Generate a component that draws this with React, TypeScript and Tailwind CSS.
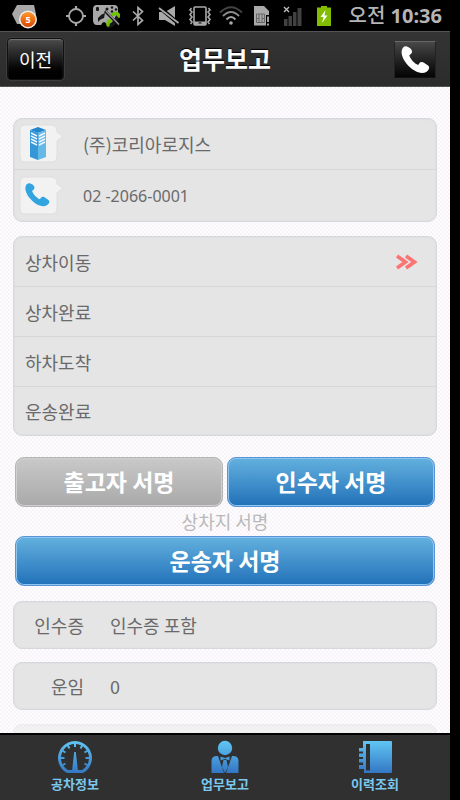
import type { ReactNode } from 'react';

const steps = [
  { id: 'load-move', label: '상차이동', current: true },
  { id: 'load-done', label: '상차완료', current: false },
  { id: 'unload-arrive', label: '하차도착', current: false },
  { id: 'delivery-done', label: '운송완료', current: false },
];

const details = [
  { label: '인수증', value: '인수증 포함' },
  { label: '운임', value: '0' },
];

const PHONE_PATH =
  'M7 1.6 C5.4 .8 3.4 1.6 2.4 3.4 C.6 6.6 1.6 12 6 17.6 C10.6 23.4 16.6 27 21.4 27 C24.4 27 26.8 25.6 27.8 23.4 C28.6 21.8 28.2 20.6 26.8 19.6 L22.8 17 C21.2 16 19.6 16.4 18.6 17.8 L17.6 19.2 C14 18 9.8 13.2 9 9.8 L10.4 8.8 C11.8 7.8 12 6.4 11.2 4.8 C10.2 3 8.8 2.4 7 1.6 Z';

const Slot = ({ children }: { children: ReactNode }) => (
  <span className="flex w-[31px] shrink-0 justify-center">{children}</span>
);

const StatusBar = () => (
  <div className="flex h-[31px] shrink-0 items-center bg-black pr-2 pl-[9px] text-[#a9a9a9]">
    {/* Notification */}
    <Slot>
      <svg width="28" height="26" viewBox="0 0 28 26">
        <path d="M6 2 H23 L25 11 L22 21 H6 L1 11 Z" fill="#a8a8a8" />
        <circle cx="17" cy="16.500" r="9" fill="#eee" />
        <circle cx="17" cy="16.500" r="7.500" fill="url(#alert)" />
        <text x="17" y="20" fontSize="9" fontWeight="700" textAnchor="middle" fill="#fff" fontFamily="Noto Sans, sans-serif">5</text>
        <defs>
          <linearGradient id="alert" x1="0" y1="0" x2="0" y2="1">
            <stop offset="0" stopColor="#ff9a2a" />
            <stop offset="1" stopColor="#d84400" />
          </linearGradient>
        </defs>
      </svg>
    </Slot>
    <div className="ml-5 flex items-center">
      {/* GPS */}
      <Slot>
        <svg width="20" height="20" viewBox="0 0 20 20" fill="none" stroke="currentColor">
          <circle cx="10" cy="10" r="7" strokeWidth="1.800" />
          <path d="M10 0V4M10 16V20M0 10H4M16 10H20" strokeWidth="2.200" />
        </svg>
      </Slot>
      {/* Game pad with call */}
      <Slot>
        <svg width="27" height="24" viewBox="0 0 27 24">
          <path d="M4 1 H21 Q25 1 25 5 V12 L20 21 H14 Q11 15 8 21 H4 Q0 21 0 16 V5 Q0 1 4 1Z" fill="#a8a8a8" />
          <g fill="#171717">
            <rect x="3" y="3" width="3" height="4" rx="1" />
            <path d="M5 14 Q8 10 12 9 L11 14 Q7 15 5 18 Z" />
            <circle cx="14" cy="5" r="1.500" />
            <circle cx="19" cy="3.500" r="1.300" />
            <circle cx="19" cy="7.500" r="1.300" />
            <circle cx="23" cy="5.500" r="1.300" />
          </g>
          <path d="M14 22 Q20 23 25 12" fill="none" stroke="#171717" strokeWidth="4" />
          <path d="M15 21 Q15 16 17.500 17 M20 10.500 Q25 8 26 12" fill="none" stroke="#6fc400" strokeWidth="3.400" strokeLinecap="round" />
          <path d="M12 7 L26 21" stroke="#171717" strokeWidth="3" />
          <path d="M13 7 L26 20.500" stroke="#999" strokeWidth="1.300" />
        </svg>
      </Slot>
      {/* Bluetooth */}
      <Slot>
        <svg width="12" height="20" viewBox="0 0 12 20" fill="none" stroke="currentColor" strokeWidth="1.700">
          <path d="M1 5.500 L10.500 14.500 L6 18.500 V1.500 L10.500 5.500 L1 14.500" />
        </svg>
      </Slot>
      {/* Muted */}
      <Slot>
        <svg width="22" height="20" viewBox="0 0 22 20">
          <path d="M1 6 H7 L17 0 V20 L7 14 H1 Z" fill="currentColor" />
          <path d="M0 0 L21 18" stroke="#000" strokeWidth="4" />
          <path d="M1 2 L20.500 17" stroke="currentColor" strokeWidth="1.800" />
        </svg>
      </Slot>
      {/* Vibrate */}
      <Slot>
        <svg width="24" height="20" viewBox="0 0 24 20" fill="none" stroke="currentColor">
          <rect x="6" y="1" width="12" height="18" rx="1" strokeWidth="1.600" />
          <path d="M6 15.500 H18 V19 H6Z" fill="currentColor" stroke="none" />
          <path d="M10.500 17 H13.500" stroke="#000" />
          <path d="M3.500 2 L2 4 L4 6 L2 8.500 L4 11 L2 13.500 L4 16 L2.500 18 M20.500 2 L22 4 L20 6 L22 8.500 L20 11 L22 13.500 L20 16 L21.500 18" strokeWidth="1.600" />
        </svg>
      </Slot>
      {/* Wifi */}
      <Slot>
        <svg width="24" height="20" viewBox="0 0 24 20" fill="none" strokeWidth="2">
          <path d="M1 6.500 Q12 -4 23 6.500" stroke="#444" />
          <path d="M4 10 Q12 2 20 10" stroke="#8a8a8a" />
          <path d="M7.500 13.500 Q12 8.500 16.500 13.500" stroke="#a0a0a0" />
          <circle cx="12" cy="17" r="1.800" fill="#a9a9a9" />
        </svg>
      </Slot>
      {/* SIM */}
      <Slot>
        <svg width="16" height="20" viewBox="0 0 16 20">
          <path d="M0 0 H10 L15 5 V9 H12 V19.500 H0Z" fill="currentColor" />
          <path d="M2.500 8 H10.500 V16.500 H2.500Z M5 8V16.500 M8 8V16.500 M2.500 12.500H5 M8 12.500H10.500" fill="none" stroke="#666" />
          <path d="M14 10.500V16M14 17.500V19.500" stroke="#ccc" strokeWidth="1.600" />
        </svg>
      </Slot>
      {/* Signal */}
      <Slot>
        <svg width="19" height="20" viewBox="0 0 19 20">
          <path d="M1 13H4.500V20H1Z M5.500 10H9V20H5.500Z M10 6H13.500V20H10Z M14.500 2H18.500V20H14.500Z" fill="#414141" />
          <path d="M1 1L6 6M6 1L1 6" stroke="#c0c0c0" strokeWidth="1.300" />
        </svg>
      </Slot>
      {/* Battery */}
      <Slot>
        <svg width="16" height="20" viewBox="0 0 16 20">
          <path d="M5 0H11V1.500H15V20H1V1.500H5Z" fill="#82bd00" />
          <path d="M9.500 4L4.500 11H7.500L6 17L11.500 9.500H8.500Z" fill="#fff" />
        </svg>
      </Slot>
    </div>
    <time className="ml-auto font-['Noto_Sans','Noto_Sans_CJK_KR',sans-serif] text-xl leading-6 font-bold whitespace-nowrap text-[#b5b5b5]">
      <span className="font-medium">오전</span> 10:36
    </time>
  </div>
);

const Header = () => (
  <header className="grid h-14 shrink-0 grid-cols-[1fr_auto_1fr] items-center border-t border-b border-t-[#555] border-b-[#555] bg-linear-to-b from-[#343434] to-[#2c2c2c] px-[7px]">
    <button
      type="button"
      className="h-[42px] w-[57px] justify-self-start rounded border border-[#111] bg-linear-to-b from-[#4c4c4c] via-[#1c1c1c] to-black text-lg text-white shadow-[inset_0_1px_1px_#777,0_0_0_1px_#3c3c3c]"
    >
      이전
    </button>
    <h1 className="text-[25px] font-bold text-white [text-shadow:0_-1px_1px_#000]">업무보고</h1>
    <a
      href="tel:02-2066-0001"
      aria-label="전화"
      className="mr-[7px] flex h-[37px] w-[42px] items-center justify-center justify-self-end border border-t-[#666] border-r-[#222] border-b-[#111] border-l-[#222] bg-linear-to-b from-[#484848] to-[#050505]"
    >
      <svg width="30" height="29" viewBox="0 0 29 28">
        <path d={PHONE_PATH} fill="#fff" />
      </svg>
    </a>
  </header>
);

const Panel = ({ children, className = '' }: { children: ReactNode; className?: string }) => (
  <div
    className={`divide-y divide-[#d6d7d9] rounded-[9px] border border-[#d6d8dc] bg-[#e5e5e5] shadow-[inset_0_0_1px_1px_#dfe0e2] ${className}`}
  >
    {children}
  </div>
);

const Bubble = ({ children }: { children: ReactNode }) => (
  <svg width="46" height="40" viewBox="0 0 46 40" className="shrink-0">
    <path
      d="M6 1 H32 Q38 1 38 7 V8 L44 12 L38 17 V32 Q38 38 32 38 H6 Q1 38 1 32 V7 Q1 1 6 1Z"
      fill="#f2f2f2"
      stroke="#dedede"
    />
    {children}
  </svg>
);

const SignButton = ({ label, disabled = false }: { label: string; disabled?: boolean }) => (
  <button
    type="button"
    disabled={disabled}
    className={
      disabled
        ? 'h-[50px] w-full rounded-[9px] border border-[#b4b4b4] bg-linear-to-b from-[#c9c9c9] to-[#a9a9a9] text-[23px] font-bold text-white shadow-[inset_0_0_0_1px_#d0d0d0]'
        : 'h-[50px] w-full rounded-[9px] border border-[#5b94d6] bg-linear-to-b from-[#63b1de] to-[#2171b9] text-[23px] font-bold text-white shadow-[inset_0_0_0_1px_#8fc6ef]'
    }
  >
    {label}
  </button>
);

const NavItem = ({ label, children }: { label: string; children: ReactNode }) => (
  <a href="#" className="flex flex-col items-center gap-0.5 pt-[5px] text-[13px] leading-4 font-bold text-[#7ac8ee]">
    <svg width="36" height="34" viewBox="0 0 36 34" fill="url(#navBlue)">
      {children}
    </svg>
    {label}
  </a>
);

const BottomNav = () => (
  <nav className="grid h-[67px] shrink-0 grid-cols-3 border-t-2 border-black bg-[#303030]">
    <NavItem label="공차정보">
      <defs>
        <linearGradient id="navBlue" gradientUnits="userSpaceOnUse" x1="0" y1="0" x2="0" y2="34">
          <stop offset="0" stopColor="#62c8f5" />
          <stop offset="1" stopColor="#3274c2" />
        </linearGradient>
      </defs>
      <path
        fillRule="evenodd"
        d="M10 33 A17 17 0 1 1 26 33 Z M11 30 A14 14 0 1 1 25 30 Z"
      />
      <path d="M17.200 12 H18.800 L21 31 H15Z" />
      <path
        d="M18 3V7M10.500 5L12.500 8.500M25.500 5L23.500 8.500M5 10.500L8.500 12.500M31 10.500L27.500 12.500M3 18H7M33 18H29M5 25.500L8.500 23.500M31 25.500L27.500 23.500"
        fill="none"
        stroke="url(#navBlue)"
        strokeWidth="2"
      />
      <rect x="3" y="17" width="4.500" height="2" />
      <rect x="28.500" y="17" width="4.500" height="2" />
    </NavItem>
    <NavItem label="업무보고">
      <circle cx="18" cy="8" r="7.200" />
      <path d="M4.500 33 V21 Q4.500 16 10 16 H11 L17 33Z M31.500 33 V21 Q31.500 16 26 16 H25 L19 33Z" />
      <path d="M13.500 16.500 L18 18 L22.500 16.500 V20.500 L18 19 L13.500 20.500Z M16.500 20 H19.500 L21 27 L18 33 L15 27Z" />
    </NavItem>
    <NavItem label="이력조회">
      <path
        fillRule="evenodd"
        d="M7 1 H34 Q35 1 35 2 V32 Q35 33 34 33 H7 V29 H2 V25 H6 V22.500 H2 V19 H6 V17 H2 V13.500 H6 V11.500 H2 V8 H6 V1Z M9 4 V30.500 H13 V4Z"
      />
    </NavItem>
  </nav>
);

const App = () => (
  <div className="h-screen bg-black pr-2.5 font-['Noto_Sans_CJK_KR',sans-serif]">
    <div className="flex h-full flex-col overflow-hidden">
      <StatusBar />
      <Header />

      <main className="min-h-0 flex-1 overflow-hidden bg-[#fbf9fb] bg-[repeating-conic-gradient(#f6f4f6_0_25%,#fffdff_0_50%)] bg-[length:4px_4px] px-[13px] pt-[31px] text-lg text-[#6a6a6a]">
        {/* Company */}
        <Panel>
          <div className="flex h-[51px] items-center gap-[18px] pl-[5px]">
            <Bubble>
              <path d="M11 6 L19 3 L27 6 L19 9Z" fill="#2486cc" />
              <path d="M11 6 L19 9 V36 L11 33Z" fill="#3597d8" />
              <path d="M27 6 L19 9 V36 L27 33Z" fill="#66b8e6" />
              <path
                d="M12 9L18 12M12 12L18 15M12 15L18 18M12 18L18 21M26 9L20 12M26 12L20 15M26 15L20 18M26 18L20 21"
                stroke="#eaf6ff"
                strokeWidth="1.500"
              />
            </Bubble>
            <span>(주)코리아로지스</span>
          </div>
          <div className="flex h-[51px] items-center gap-[18px] pl-[5px]">
            <Bubble>
              <path d={PHONE_PATH} fill="#32a4df" transform="translate(5 6) scale(.9)" />
            </Bubble>
            <a href="tel:02-2066-0001" className="font-['Noto_Sans',sans-serif] text-base">
              02 -2066-0001
            </a>
          </div>
        </Panel>

        {/* Transport steps */}
        <Panel className="mt-3.5">
          {steps.map((step) => (
            <button
              key={step.id}
              type="button"
              className="flex h-[50px] w-full items-center justify-between pr-[18px] pl-[11px] last:h-12"
            >
              {step.label}
              {step.current && (
                <svg width="22" height="16" viewBox="0 0 22 16" fill="none" stroke="#fb7373" strokeWidth="3.600">
                  <path d="M1 2L9.500 8L1 14M10 2L18.500 8L10 14" />
                </svg>
              )}
            </button>
          ))}
        </Panel>

        {/* Signatures */}
        <div className="mt-[21px] px-0.5">
          <div className="grid grid-cols-2 gap-1">
            <SignButton label="출고자 서명" disabled />
            <SignButton label="인수자 서명" />
          </div>
          <p className="text-center leading-[29px] text-[#b9b9b9]">상차지 서명</p>
          <SignButton label="운송자 서명" />
        </div>

        {/* Receipt and fare */}
        <dl className="mt-[15px] flex flex-col gap-[13px]">
          {details.map((item) => (
            <Panel key={item.label}>
              <div className="flex h-[46px] items-center gap-[26px]">
                <dt className="w-[70px] text-right">{item.label}</dt>
                <dd>{item.value}</dd>
              </div>
            </Panel>
          ))}
        </dl>
        <Panel className="mt-3.5 h-12 opacity-40">{null}</Panel>
      </main>

      <BottomNav />
    </div>
  </div>
);

export default App;
